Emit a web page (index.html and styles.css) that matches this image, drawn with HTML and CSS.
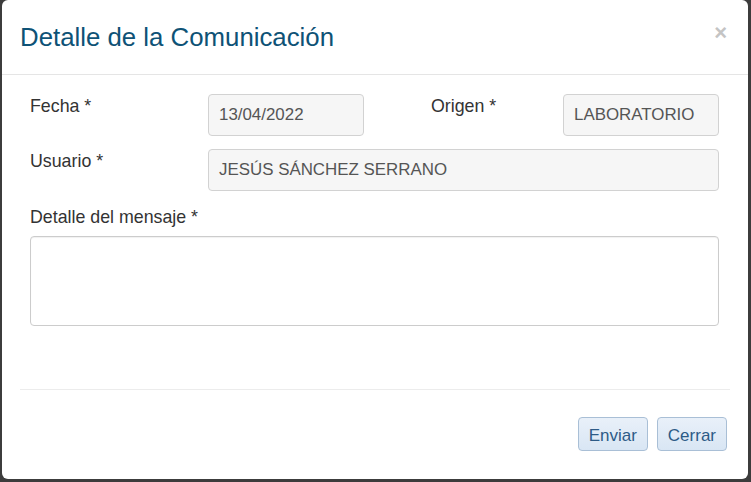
FILE: index.html
```html
<!DOCTYPE html>
<html lang="es">
<head>
    <meta charset="UTF-8">
    <meta name="viewport" content="width=device-width, initial-scale=1.0">
    <title>Detalle de la Comunicación</title>
    <link rel="stylesheet" href="styles.css">
</head>
<body>
    <div class="modal">
        <header class="modal-header">
            <h1>Detalle de la Comunicación</h1>
            <span class="close">&times;</span>
        </header>
        <section class="modal-body">
            <div class="form-grid">
                <label class="lbl">Fecha *</label>
                <div class="input">13/04/2022</div>
                <label class="lbl lbl-origen">Origen *</label>
                <div class="input">LABORATORIO</div>

                <label class="lbl">Usuario *</label>
                <div class="input input-wide">JESÚS SÁNCHEZ SERRANO</div>
            </div>
            <label class="lbl lbl-block">Detalle del mensaje *</label>
            <div class="textarea"></div>
        </section>
        <footer class="modal-footer">
            <button class="btn">Enviar</button>
            <button class="btn">Cerrar</button>
        </footer>
    </div>
</body>
</html>
```

FILE: styles.css
```css
body {
    margin: 0;
    padding: 0;
    height: 482px;
    overflow: hidden;
    background-color: #3c3c3c;
    font-family: 'Liberation Sans', Arial, sans-serif;
    color: #333;
}
.modal {
    margin: 0 3px 0 2px;
    height: 479px;
    background: #fff;
    border-radius: 6px;
    display: flex;
    flex-direction: column;
}
.modal-header {
    height: 74px;
    padding: 0 21px 0 18px;
    border-bottom: 1px solid #e5e5e5;
    display: flex;
    align-items: center;
    justify-content: space-between;
}
.modal-header h1 {
    margin: 0;
    font-size: 25.8px;
    font-weight: normal;
    color: #0e5276;
}
.close {
    color: #c4c4c4;
    font-size: 22px;
    font-weight: bold;
    margin-top: -8px;
}
.modal-body {
    height: 314px;
    box-sizing: border-box;
    padding: 19px 29px 0 28px;
}
.form-grid {
    display: grid;
    grid-template-columns: 178px 156px 199px 156px;
    row-gap: 13px;
}
.lbl {
    font-size: 17.8px;
    line-height: 20px;
    padding-top: 2px;
}
.lbl-origen {
    padding-left: 67px;
}
.lbl-block {
    display: block;
    margin-top: 14px;
}
.input {
    height: 42px;
    box-sizing: border-box;
    padding: 0 10px;
    display: flex;
    align-items: center;
    background: #f6f6f6;
    border: 1px solid #d2d2d2;
    border-radius: 4px;
    font-size: 16.9px;
    color: #555;
}
.input-wide {
    grid-column: 2 / 5;
}
.textarea {
    height: 90px;
    box-sizing: border-box;
    margin-top: 9px;
    border: 1px solid #ccc;
    border-radius: 4px;
    box-shadow: inset 0 1px 1px rgba(0, 0, 0, 0.06);
}
.modal-footer {
    margin: 0 18px;
    padding: 27px 3px 0 0;
    border-top: 1px solid #ececec;
    display: flex;
    justify-content: flex-end;
    gap: 9px;
}
.btn {
    height: 34px;
    padding: 3px 10px 0;
    font-family: 'Liberation Sans', Arial, sans-serif;
    font-size: 17px;
    color: #2d5b87;
    background: linear-gradient(#e9f0f9, #d9e6f4);
    border: 1px solid #a9bfd6;
    border-radius: 4px;
}
```
